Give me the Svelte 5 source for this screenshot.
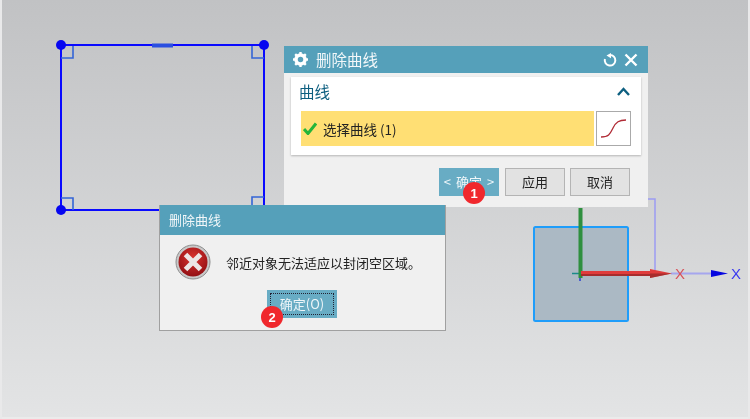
<script>
	// full canvas scene: sketch and gizmo sit in one svg, dialogs float above it
	const cad = '"Noto Sans CJK SC", "Liberation Sans", sans-serif';
</script>

<div class="viewport" style:font-family={cad}>
	<svg class="scene" width="750" height="419" viewBox="0 0 750 419">
		<!-- sketch -->
		<rect x="61" y="45" width="203" height="165" fill="none" stroke="#0a0aff" stroke-width="2" />
		<path d="M152 45.500h21" stroke="#2a4fe0" stroke-width="4" />
		<path
			d="M61 58h12v-12M252 46v12h12M61 198h12v12M252 209v-12h12"
			fill="none"
			stroke="#3465d6"
			stroke-width="1.600"
		/>
		<circle cx="61" cy="45" r="5" fill="#0606f0" />
		<circle cx="264" cy="45" r="5" fill="#0606f0" />
		<circle cx="61" cy="210" r="5" fill="#0606f0" />

		<!-- gizmo -->
		<rect x="534" y="227" width="94" height="94" rx="1.500" fill="#abb9c4" stroke="#1f9dfa" stroke-width="2" />
		<path d="M648 199h7v74" fill="none" stroke="#9c9cf2" stroke-width="1.500" />
		<path d="M671 273.500h41" stroke="#a6a6ee" stroke-width="2" />
		<path d="M711 270l17 3.500l-17 3.500z" fill="#0606e0" />
		<path d="M580 267v14" stroke="#2a3fd0" stroke-width="1.500" />
		<path d="M572 273.500h15" stroke="#1a8a8a" stroke-width="1.500" />
		<rect x="578.500" y="208" width="4" height="70" fill="#2f8f3f" />
		<path d="M581 271h69v-2l22 4.500l-22 4.500v-2h-69z" fill="#e03c3c" />
		<path d="M581 274h69v-0.500h22l-22 4.500v-2h-69z" fill="#8f2626" opacity="0.7" />
		<text x="680" y="279" class="axis red">X</text>
		<text x="736" y="279" class="axis blue">X</text>
	</svg>

	<section class="dialog main-dialog">
		<header class="bar">
			<svg width="17" height="17" viewBox="0 0 17 17">
				<circle cx="8.500" cy="8.500" r="4.500" fill="none" stroke="#fff" stroke-width="3.500" />
				<path
					d="M8.500 1v2.500M8.500 13.500v2.500M1 8.500h2.500M13.500 8.500h2.500M3.200 3.200l1.800 1.800M12 12l1.800 1.800M3.200 13.800l1.800-1.800M12 5l1.800-1.800"
					stroke="#fff"
					stroke-width="2.400"
				/>
			</svg>
			<span class="title">删除曲线</span>
			<svg width="14" height="14" viewBox="0 0 14 14">
				<path d="M7 2a5.300 5.300 0 1 1-5.100 4" fill="none" stroke="#fff" stroke-width="2" />
				<path d="M8 0v5.200l-4.500-2.600z" fill="#fff" />
			</svg>
			<svg width="14" height="14" viewBox="0 0 14 14">
				<path d="M1.500 1.500l11 11M12.500 1.500l-11 11" stroke="#fff" stroke-width="2.400" />
			</svg>
		</header>

		<div class="panel">
			<div class="panel-head">
				<span>曲线</span>
				<svg width="13" height="9" viewBox="0 0 13 9">
					<path d="M1 8l5.500-6l5.500 6" fill="none" stroke="#0d5f80" stroke-width="2.400" />
				</svg>
			</div>
			<div class="select-row">
				<div class="selection">
					<svg width="14" height="13" viewBox="0 0 14 13">
						<path d="M1 7l4 4.500l8-10" fill="none" stroke="#25b53a" stroke-width="3" />
					</svg>
					<span>选择曲线 (1)</span>
				</div>
				<div class="curve-btn">
					<svg width="27" height="22" viewBox="0 0 27 22">
						<path d="M1 19c8 0 9-3 12-9c3-6 6-8 13-8" fill="none" stroke="#b02a35" stroke-width="1.300" />
					</svg>
				</div>
			</div>
		</div>

		<div class="actions">
			<button class="btn primary"><span>&lt;</span>确定<span>&gt;</span></button>
			<button class="btn">应用</button>
			<button class="btn">取消</button>
		</div>
	</section>

	<section class="dialog error-dialog">
		<header class="bar">
			<span class="title">删除曲线</span>
		</header>
		<div class="message">
			<svg width="36" height="36" viewBox="0 0 36 36">
				<defs>
					<radialGradient id="err" cx="50%" cy="35%" r="70%">
						<stop offset="0" stop-color="#d9332f" />
						<stop offset="1" stop-color="#8e0d12" />
					</radialGradient>
				</defs>
				<circle cx="18" cy="18" r="17" fill="#c9c9c9" stroke="#8d8d8d" />
				<circle cx="18" cy="18" r="14.500" fill="url(#err)" />
				<path d="M10.500 10.500l15 15M25.500 10.500l-15 15" stroke="#ece6e6" stroke-width="5" />
			</svg>
			<p>邻近对象无法适应以封闭空区域。</p>
		</div>
		<div class="error-actions">
			<button class="btn primary focused"><span>确定(O)</span></button>
		</div>
	</section>

	<div class="badge one">1</div>
	<div class="badge two">2</div>
</div>

<style>
	:global(body) {
		margin: 0;
	}

	.viewport {
		position: relative;
		width: 750px;
		height: 419px;
		overflow: hidden;
		background: linear-gradient(#c1c2c4, #e3e4e5);
		box-shadow:
			inset 2px 0 #e9e9ea,
			inset -2px 0 #e9e9ea,
			inset 0 -2px #ebebeb;
		filter: blur(0.35px);
	}

	.scene {
		position: absolute;
		top: 0;
		left: 0;
	}

	.axis {
		font: 15px "Liberation Sans", sans-serif;
		text-anchor: middle;
	}

	.red {
		fill: #d8545c;
	}

	.blue {
		fill: #3a3af0;
	}

	.dialog {
		position: absolute;
		display: flex;
		flex-direction: column;
		box-sizing: border-box;
		background: #f0f0f0;
	}

	.bar {
		display: flex;
		align-items: center;
		background: #55a0ba;
		color: #fff;
	}

	.title {
		flex: 1;
		padding-bottom: 2px;
		font-size: 13px;
		color: #f2f7f9;
	}

	.main-dialog {
		left: 284px;
		top: 46px;
		width: 364px;
		height: 161px;
	}

	.main-dialog .bar {
		height: 27px;
		padding: 0 10px 0 8px;
		gap: 7px;
		flex: none;
	}

	.main-dialog .title {
		font-size: 15.5px;
		margin-right: 2px;
	}

	.panel {
		margin: 4px 7px 0 7px;
		height: 78px;
		background: #fff;
		box-shadow: 0 1px 2px rgba(0, 0, 0, 0.25);
		padding: 0 10px 0 8px;
		flex: none;
	}

	.panel-head {
		display: flex;
		align-items: center;
		justify-content: space-between;
		height: 28px;
		padding-right: 1px;
		font-size: 15.5px;
		color: #0d5f80;
	}

	.select-row {
		display: flex;
		gap: 2px;
		margin-top: 6px;
		padding-left: 2px;
	}

	.selection {
		flex: 1;
		display: flex;
		align-items: center;
		gap: 6px;
		height: 35px;
		padding-left: 2px;
		background: #ffdf74;
		font-size: 13.5px;
		color: #222;
	}

	.curve-btn {
		display: flex;
		align-items: center;
		justify-content: center;
		box-sizing: border-box;
		width: 35px;
		height: 35px;
		border: 1px solid #aaa;
		background: #fff;
	}

	.actions {
		display: flex;
		justify-content: flex-end;
		gap: 5px;
		margin-top: 13px;
		padding-right: 18px;
	}

	.btn {
		box-sizing: border-box;
		width: 60px;
		height: 28px;
		padding: 0 0 1px;
		border: 1px solid #b4b4b4;
		border-radius: 0;
		background: #e2e2e2;
		font: 13px "Noto Sans CJK SC", sans-serif;
		color: #222;
	}

	.primary {
		display: flex;
		align-items: center;
		justify-content: center;
		gap: 5px;
		margin-right: 1px;
		border-color: #68acc4;
		background: #68acc4;
		color: #eef6f9;
	}

	.error-dialog {
		left: 159px;
		top: 205px;
		width: 287px;
		height: 126px;
		border: 1px solid #a0a0a0;
		border-top: none;
	}

	.error-dialog .bar {
		height: 30px;
		padding-left: 9px;
		flex: none;
	}

	.message {
		display: flex;
		align-items: center;
		gap: 15px;
		padding: 9px 0 0 15px;
	}

	.message p {
		margin: 0;
		font-size: 13px;
		color: #222;
		white-space: nowrap;
	}

	.error-actions {
		display: flex;
		justify-content: center;
		margin-top: 10px;
		padding-right: 1px;
	}

	.focused {
		width: 70px;
		margin-right: 0;
		padding: 0;
		border: 3px solid #68acc4;
	}

	.focused span {
		box-sizing: border-box;
		display: flex;
		align-items: center;
		justify-content: center;
		width: 100%;
		height: 100%;
		padding-bottom: 2px;
		border: 1px dotted #223;
	}

	.badge {
		position: absolute;
		display: flex;
		align-items: center;
		justify-content: center;
		width: 22px;
		height: 22px;
		border-radius: 50%;
		background: #f0282d;
		color: #fff;
		font: bold 13px "Liberation Sans", sans-serif;
	}

	.one {
		left: 463px;
		top: 182px;
	}

	.two {
		left: 261px;
		top: 306px;
	}
</style>
